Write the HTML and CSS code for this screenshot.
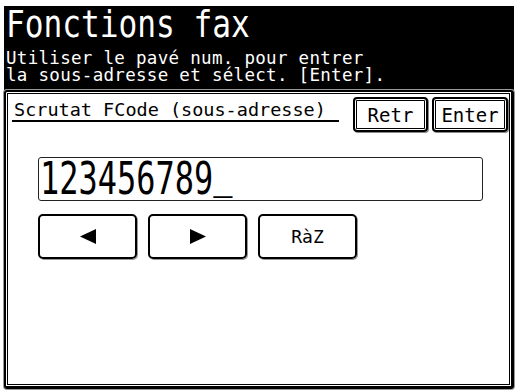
FILE: index.html
```html
<!DOCTYPE html>
<html lang="fr">
<head>
    <meta charset="UTF-8">
    <title>Fonctions fax</title>
    <link rel="stylesheet" href="styles.css">
</head>
<body>
    <div class="screen">
        <div class="header">
            <div class="title"><span>Fonctions fax</span></div>
            <div class="hint">
                <div class="hint-line">Utiliser le pavé num. pour entrer</div>
                <div class="hint-line">la sous-adresse et sélect. [Enter].</div>
            </div>
        </div>
        <div class="panel">
            <div class="panel-head">
                <div class="panel-title">Scrutat FCode (sous-adresse)</div>
                <div class="head-buttons">
                    <div class="key key-retr">Retr</div>
                    <div class="key key-enter">Enter</div>
                </div>
            </div>
            <div class="entry"><span>123456789<span class="cursor">_</span></span></div>
            <div class="pad">
                <div class="pad-btn">
                    <svg width="16" height="15" viewBox="0 0 16 15"><polygon points="0,7.5 16,0 16,15" fill="#000"/></svg>
                </div>
                <div class="pad-btn">
                    <svg width="16" height="15" viewBox="0 0 16 15"><polygon points="16,7.5 0,0 0,15" fill="#000"/></svg>
                </div>
                <div class="pad-btn pad-text">RàZ</div>
            </div>
        </div>
    </div>
</body>
</html>
```

FILE: styles.css
```css
body {
    margin: 0;
    background-color: #fff;
    color: #000;
    font-family: "DejaVu Sans Mono", monospace;
}

.screen {
    width: 517px;
    height: 390px;
    padding: 6px 3px 1px 4px;
    box-sizing: border-box;
    display: flex;
    flex-direction: column;
}

/* black title area */
.header {
    background-color: #000;
    color: #fff;
    height: 84px;
    padding-left: 2px;
    box-sizing: border-box;
}

.title {
    font-size: 38px;
    line-height: 36px;
    white-space: nowrap;
}

.title span {
    display: inline-block;
    transform: scaleX(0.82);
    transform-origin: left center;
}

.hint {
    margin-top: 8px;
}

.hint-line {
    font-size: 17.5px;
    line-height: 17px;
    height: 17px;
    letter-spacing: 0.3px;
    white-space: nowrap;
}

/* framed panel */
.panel {
    flex: 1;
    border-style: solid;
    border-color: #000;
    border-width: 2px 3px 3px 2px;
    border-radius: 3px;
    box-shadow: inset 0 0 0 1px #fff, inset 0 0 0 2px #000, 0 0 0 1px #999;
    display: flex;
    flex-direction: column;
}

.panel-head {
    display: flex;
    align-items: flex-start;
    padding: 5px 3px 0 6px;
}

.panel-title {
    width: 327px;
    height: 25px;
    padding: 3px 0 0 2px;
    box-sizing: border-box;
    border-bottom: 2px solid #000;
    font-size: 18.5px;
    line-height: 20px;
    white-space: nowrap;
}

.head-buttons {
    margin-left: auto;
    display: flex;
    gap: 4px;
}

.key {
    height: 35px;
    border: 2px solid #000;
    border-radius: 4px;
    box-shadow: inset 0 0 0 1px #fff, inset 0 0 0 2px #000, 1px 1px 0 #888;
    box-sizing: border-box;
    display: flex;
    justify-content: center;
    align-items: center;
    font-size: 19px;
}

.key-retr {
    width: 75px;
}

.key-enter {
    width: 76px;
}

/* number entry */
.entry {
    width: 445px;
    height: 44px;
    margin: 25px 0 0 32px;
    border: 1px solid #222;
    border-radius: 3px;
    box-sizing: border-box;
    font-size: 45px;
    line-height: 42px;
    padding-left: 1px;
    white-space: nowrap;
}

.entry > span {
    display: inline-block;
    transform: scaleX(0.71);
    transform-origin: left center;
}

.cursor {
    line-height: 0;
    vertical-align: 7px;
}

.pad {
    display: flex;
    gap: 11px;
    margin: 13px 0 0 32px;
}

.pad-btn {
    width: 99px;
    height: 45px;
    border: 2px solid #000;
    border-radius: 5px;
    box-shadow: 1px 1px 0 #999;
    box-sizing: border-box;
    display: flex;
    justify-content: center;
    align-items: center;
}

.pad-text {
    font-size: 18px;
}
```
